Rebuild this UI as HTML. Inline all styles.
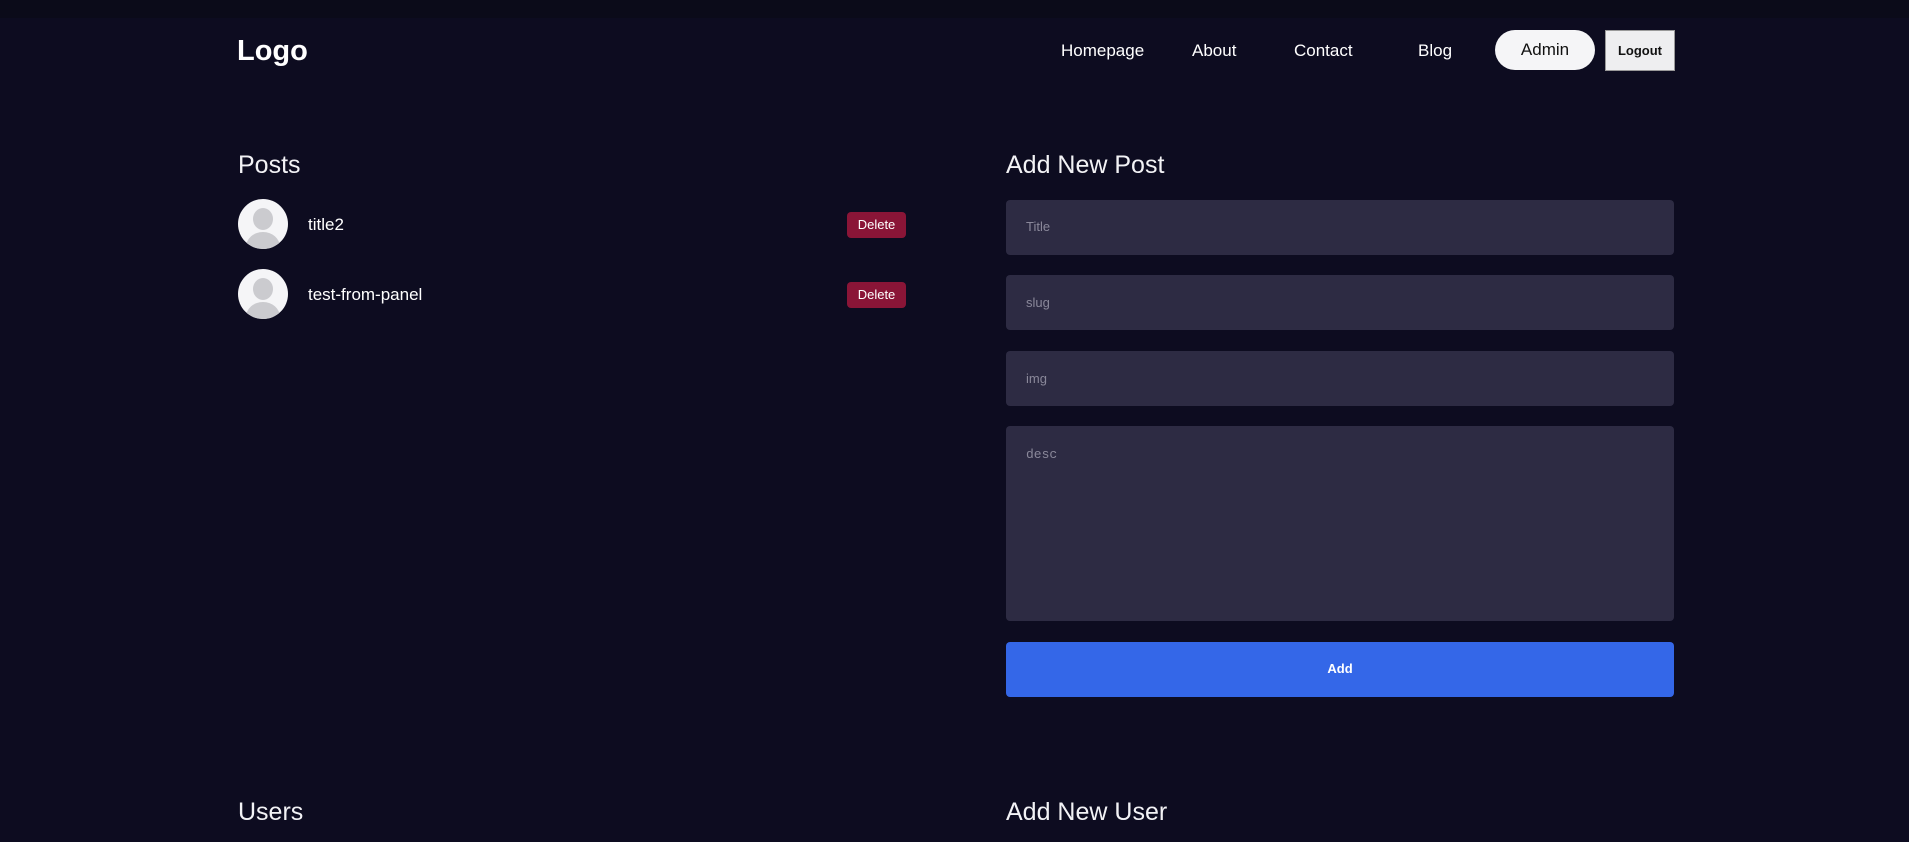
<!DOCTYPE html>
<html><head><style>
body{margin:0;width:1909px;height:842px;overflow:hidden;background:#0d0c20;font-family:"Liberation Sans",sans-serif;color:#fff;position:relative}
.a{position:absolute}
.nav{font-size:17px;top:41px}
.h{font-size:25px;color:#f2f2f5}
.inp{position:absolute;left:1006px;width:668px;background:#2d2b43;border-radius:4px}
.ph{position:absolute;left:20px;color:#8a889a;font-size:13px}
.av{position:absolute;left:238px;width:50px;height:50px;border-radius:50%;background:#f5f5f7;overflow:hidden}
.av:before{content:"";position:absolute;left:15px;top:9px;width:20px;height:22px;border-radius:50%;background:#cbcbcf}
.av:after{content:"";position:absolute;left:8px;top:33px;width:34px;height:30px;border-radius:50%;background:#cbcbcf}
.del{position:absolute;left:847px;width:59px;height:26px;background:#8a1537;border-radius:4px;font-size:13px;line-height:26px;text-align:center}
.pt{position:absolute;left:308px;font-size:17px}
</style></head><body>
<div class="a" style="left:0;top:0;width:1909px;height:18px;background:#0b0b19"></div>
<div class="a" style="left:237px;top:35px;font-size:29px;font-weight:bold">Logo</div>
<div class="a nav" style="left:1061px">Homepage</div>
<div class="a nav" style="left:1192px">About</div>
<div class="a nav" style="left:1294px">Contact</div>
<div class="a nav" style="left:1418px">Blog</div>
<div class="a" style="left:1495px;top:30px;width:100px;height:40px;border-radius:20px;background:#f5f5f7;color:#111;font-size:17px;line-height:40px;text-align:center">Admin</div>
<div class="a" style="left:1605px;top:30px;width:68px;height:39px;background:#eeeef0;border:1px solid #999;color:#111;font-size:13px;font-weight:bold;line-height:39px;text-align:center">Logout</div>

<div class="a h" style="left:238px;top:151px">Posts</div>
<div class="av" style="top:199px"></div><div class="pt" style="top:215px">title2</div>
<div class="del" style="top:212px">Delete</div>
<div class="av" style="top:269px"></div><div class="pt" style="top:285px">test-from-panel</div>
<div class="del" style="top:282px">Delete</div>

<div class="a h" style="left:1006px;top:151px">Add New Post</div>
<div class="inp" style="top:200px;height:55px"><span class="ph" style="top:19px">Title</span></div>
<div class="inp" style="top:275px;height:55px"><span class="ph" style="top:20px">slug</span></div>
<div class="inp" style="top:351px;height:55px"><span class="ph" style="top:20px">img</span></div>
<div class="inp" style="top:426px;height:195px"><span class="ph" style="top:21px;font-family:'Liberation Mono',monospace">desc</span></div>
<div class="a" style="left:1006px;top:642px;width:668px;height:55px;background:#3467e8;border-radius:4px;font-size:13px;font-weight:bold;line-height:53px;text-align:center">Add</div>

<div class="a h" style="left:238px;top:798px">Users</div>
<div class="a h" style="left:1006px;top:798px">Add New User</div>
</body></html>
